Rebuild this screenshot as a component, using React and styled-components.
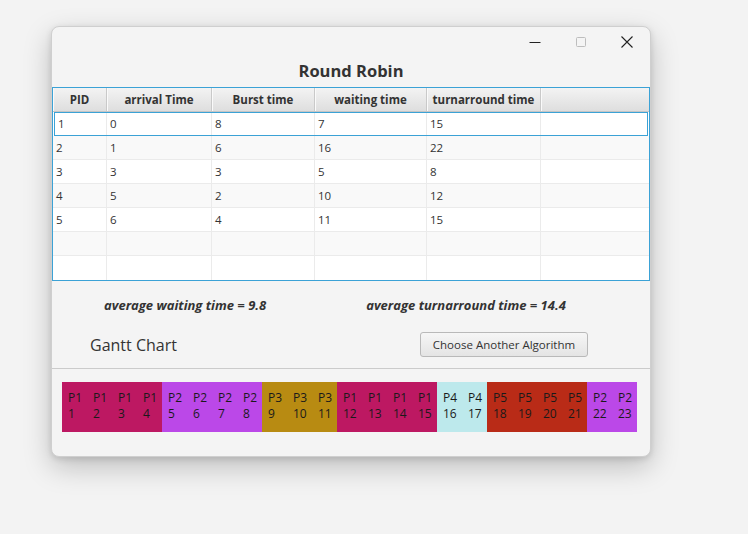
import React from 'react';
import styled, { createGlobalStyle } from 'styled-components';

const GlobalStyle = createGlobalStyle`
  html, body {
    margin: 0;
    padding: 0;
    background: #f3f3f3;
  }
  body {
    font-family: "Open Sans", "Noto Sans", sans-serif;
    width: 748px;
    height: 534px;
    overflow: hidden;
  }
`;

const Window = styled.div`
  margin: 26px 0 0 51px;
  width: 600px;
  height: 431px;
  box-sizing: border-box;
  background: #f4f4f4;
  border: 1px solid #cfcfcf;
  border-radius: 8px;
  box-shadow: 0 10px 28px rgba(0, 0, 0, 0.22), 0 2px 6px rgba(0, 0, 0, 0.12);
  display: flex;
  flex-direction: column;
  overflow: hidden;
`;

const TitleBar = styled.div`
  height: 30px;
  display: flex;
  justify-content: flex-end;
  align-items: center;
`;

const WinButton = styled.div`
  width: 46px;
  height: 30px;
  display: flex;
  align-items: center;
  justify-content: center;
`;

const Heading = styled.div`
  text-align: center;
  font-size: 16.5px;
  font-weight: 700;
  color: #333;
  height: 30px;
  line-height: 28px;
`;

const TableBox = styled.div`
  height: 194px;
  flex: none;
  box-sizing: border-box;
  border: 1px solid #3ba2d6;
  background: #fff;
  display: flex;
  flex-direction: column;
  overflow: hidden;
`;

const HeaderRow = styled.div`
  display: flex;
  height: 24px;
  flex: none;
  background: linear-gradient(#f3f3f3, #dedede);
  border-bottom: 1px solid #c6c6c6;
  box-sizing: border-box;
`;

const HeaderCell = styled.div`
  width: ${p => p.w}px;
  flex: ${p => (p.grow ? 1 : 'none')};
  border-right: ${p => (p.grow ? 'none' : '1px solid #c9c9c9')};
  box-shadow: inset 1px 0 0 #fafafa;
  box-sizing: border-box;
  text-align: center;
  font-size: 11.5px;
  font-weight: 700;
  color: #333;
  line-height: 23px;
`;

const Row = styled.div`
  display: flex;
  flex: none;
  box-sizing: border-box;
  background: ${p => (p.odd ? '#f9f9f9' : '#ffffff')};
  border: ${p => (p.focused ? '1px solid #3ba2d6' : 'none')};
  margin: ${p => (p.focused ? '0 1px 0 1px' : '0')};
  height: 24px;
`;

const Cell = styled.div`
  width: ${p => p.w}px;
  flex: ${p => (p.grow ? 1 : 'none')};
  border-right: ${p => (p.grow ? 'none' : '1px solid #ebebeb')};
  border-bottom: ${p => (p.focused || p.last ? 'none' : '1px solid #ebebeb')};
  box-sizing: border-box;
  padding-left: 3px;
  font-size: 11.5px;
  color: #333;
  line-height: ${p => (p.focused ? '21px' : '23px')};
`;

const Averages = styled.div`
  display: flex;
  height: 47px;
  flex: none;
  align-items: center;
  font-size: 13px;
  font-weight: 700;
  font-style: italic;
  color: #333;
`;

const AvgText = styled.div`
  margin-left: ${p => p.ml}px;
`;

const GanttHead = styled.div`
  display: flex;
  align-items: center;
  height: 40px;
  flex: none;
  border-bottom: 1px solid #cbcbcb;
`;

const GanttTitle = styled.div`
  margin-left: 38px;
  font-size: 16px;
  color: #333;
  width: 330px;
  margin-top: -6px;
`;

const Button = styled.button`
  width: 168px;
  height: 25px;
  margin-top: -7px;
  font-family: inherit;
  font-size: 11.5px;
  color: #333;
  background: linear-gradient(#f6f6f6, #e4e4e4);
  border: 1px solid #b9b9b9;
  border-radius: 3px;
  padding: 0;
`;

const GanttArea = styled.div`
  padding: 13px 0 0 10px;
  display: flex;
`;

const GanttCell = styled.div`
  width: 25px;
  height: 50px;
  box-sizing: border-box;
  padding: 8px 0 0 6px;
  background: ${p => p.bg};
  font-size: 12px;
  line-height: 16px;
  color: #1a1a1a;
`;

const cols = [54, 105, 103, 112, 114];
const headers = ['PID', 'arrival Time', 'Burst time', 'waiting time', 'turnarround time'];
const rows = [
  ['1', '0', '8', '7', '15'],
  ['2', '1', '6', '16', '22'],
  ['3', '3', '3', '5', '8'],
  ['4', '5', '2', '10', '12'],
  ['5', '6', '4', '11', '15'],
  ['', '', '', '', ''],
  ['', '', '', '', ''],
];

const colors = {
  P1: '#bd1862',
  P2: '#bb48e8',
  P3: '#b88b12',
  P4: '#bde9ec',
  P5: '#b92b17',
};

const order = ['P1', 'P1', 'P1', 'P1', 'P2', 'P2', 'P2', 'P2', 'P3', 'P3', 'P3',
  'P1', 'P1', 'P1', 'P1', 'P4', 'P4', 'P5', 'P5', 'P5', 'P5', 'P2', 'P2'];

export default function App() {
  return (
    <>
      <GlobalStyle />
      <Window>
        <TitleBar>
          <WinButton>
            <svg width="12" height="12" viewBox="0 0 12 12">
              <line x1="0.5" y1="6.5" x2="11.5" y2="6.5" stroke="#222" strokeWidth="1" />
            </svg>
          </WinButton>
          <WinButton>
            <svg width="12" height="12" viewBox="0 0 12 12">
              <rect x="1.5" y="1.5" width="9" height="9" rx="1" fill="none" stroke="#bdbdbd" strokeWidth="1" />
            </svg>
          </WinButton>
          <WinButton>
            <svg width="12" height="12" viewBox="0 0 12 12">
              <path d="M0.5 0.5 L11.5 11.5 M11.5 0.5 L0.5 11.5" stroke="#222" strokeWidth="1.1" />
            </svg>
          </WinButton>
        </TitleBar>
        <Heading>Round Robin</Heading>
        <TableBox>
          <HeaderRow>
            {headers.map((h, i) => (
              <HeaderCell key={i} w={cols[i]}>{h}</HeaderCell>
            ))}
            <HeaderCell grow />
          </HeaderRow>
          {rows.map((r, ri) => (
            <Row key={ri} odd={ri % 2 === 1} focused={ri === 0}>
              {r.map((c, ci) => (
                <Cell
                  key={ci}
                  focused={ri === 0}
                  last={ri === rows.length - 1}
                  w={ri === 0 && ci === 0 ? cols[ci] - 2 : cols[ci]}
                >
                  {c}
                </Cell>
              ))}
              <Cell grow focused={ri === 0} last={ri === rows.length - 1} />
            </Row>
          ))}
        </TableBox>
        <Averages>
          <AvgText ml={52}>average waiting time = 9.8</AvgText>
          <AvgText ml={100}>average turnarround time = 14.4</AvgText>
        </Averages>
        <GanttHead>
          <GanttTitle>Gantt Chart</GanttTitle>
          <Button>Choose Another Algorithm</Button>
        </GanttHead>
        <GanttArea>
          {order.map((p, i) => (
            <GanttCell key={i} bg={colors[p]}>
              {p}
              <br />
              {i + 1}
            </GanttCell>
          ))}
        </GanttArea>
      </Window>
    </>
  );
}
